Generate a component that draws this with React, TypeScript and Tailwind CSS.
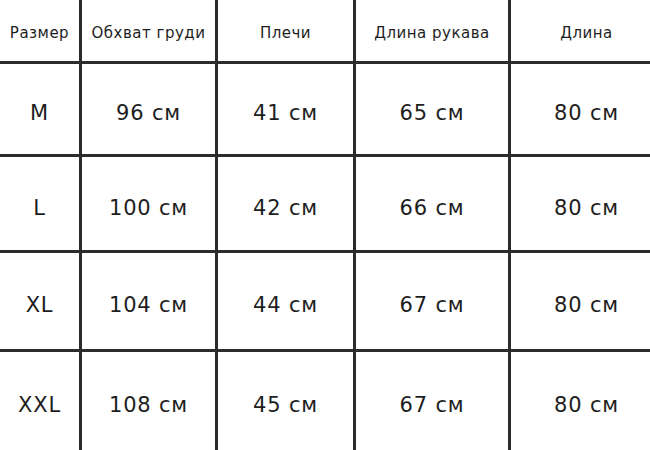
const header = ["Размер", "Обхват груди", "Плечи", "Длина рукава", "Длина"];

const rows = [
  ["M", "96 см", "41 см", "65 см", "80 см"],
  ["L", "100 см", "42 см", "66 см", "80 см"],
  ["XL", "104 см", "44 см", "67 см", "80 см"],
  ["XXL", "108 см", "45 см", "67 см", "80 см"],
];

export default function App() {
  return (
    <div
      className="w-[650px] h-[450px] bg-[#2b2b2b] grid grid-cols-[79px_133px_135px_152px_139px] grid-rows-[61px_90px_93px_96px_98px] gap-[3px] text-[#1e1e1e]"
      style={{ fontFamily: '"DejaVu Sans", "Noto Sans", sans-serif' }}
    >
      {header.map((h, i) => (
        <div
          key={h}
          className={
            "bg-white flex items-center justify-center pt-[5px] text-[15px] tracking-[0.5px] " +
            (i === 4 ? "pl-[12px]" : "")
          }
        >
          {h}
        </div>
      ))}
      {rows.map((row) =>
        row.map((cell, i) => (
          <div
            key={row[0] + i}
            className={
              "bg-white flex items-center justify-center pt-[10px] text-[21px] tracking-[0.8px] " +
              (i === 4 ? "pl-[12px]" : "")
            }
          >
            {cell}
          </div>
        ))
      )}
    </div>
  );
}
